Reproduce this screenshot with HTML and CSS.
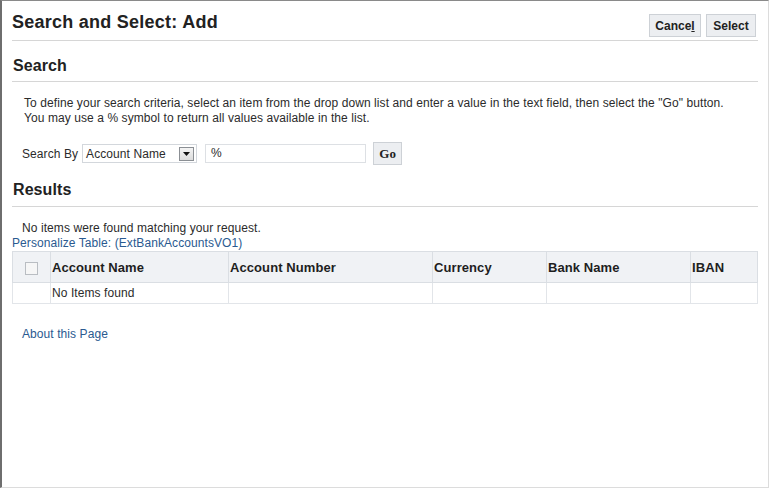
FILE: index.html
```html
<!DOCTYPE html>
<html>
<head>
<meta charset="utf-8">
<title>Search and Select: Add</title>
<link rel="stylesheet" href="styles.css">
</head>
<body>
<div class="frame">
  <div class="page">
    <div class="page-header">
      <h1 class="page-title">Search and Select: Add</h1>
      <div class="actions">
        <button class="btn">Cance<u>l</u></button>
        <button class="btn">Select</button>
      </div>
    </div>

    <h2 class="section-title">Search</h2>
    <p class="instructions">To define your search criteria, select an item from the drop down list and enter a value in the text field, then select the "Go" button.<br>You may use a % symbol to return all values available in the list.</p>
    <div class="search-row">
      <span class="label">Search By</span>
      <div class="select">
        <span class="select-text">Account Name</span>
        <span class="select-btn"><svg width="7" height="4" viewBox="0 0 7 4"><path d="M0 0H7L3.5 4Z" fill="#111"/></svg></span>
      </div>
      <div class="text-input">%</div>
      <button class="go-btn">Go</button>
    </div>

    <h2 class="section-title results-title">Results</h2>
    <div class="message">No items were found matching your request.</div>
    <a class="link personalize">Personalize Table: (ExtBankAccountsVO1)</a>
    <table class="grid">
      <colgroup>
        <col class="c1"><col class="c2"><col class="c3"><col class="c4"><col class="c5"><col class="c6">
      </colgroup>
      <thead>
        <tr>
          <th class="check-cell"><span class="checkbox"></span></th>
          <th>Account Name</th>
          <th>Account Number</th>
          <th>Currency</th>
          <th>Bank Name</th>
          <th>IBAN</th>
        </tr>
      </thead>
      <tbody>
        <tr>
          <td></td>
          <td>No Items found</td>
          <td></td>
          <td></td>
          <td></td>
          <td></td>
        </tr>
      </tbody>
    </table>
    <a class="link about">About this Page</a>
  </div>
</div>
</body>
</html>
```

FILE: styles.css
```css
html, body {
  margin: 0;
  padding: 0;
  background: #ffffff;
}

body {
  font-family: "Liberation Sans", Arial, sans-serif;
  font-size: 12px;
  color: #2b2b2b;
  letter-spacing: 0.08px;
}

.frame {
  box-sizing: border-box;
  width: 769px;
  height: 488px;
  border-top: 1px solid #8a8a8a;
  border-left: 2px solid #6e6e6e;
  border-right: 1px solid #dcdcdc;
  border-bottom: 1px solid #dcdcdc;
}

.page {
  padding: 0 10px 0 10px;
}

.page-header {
  display: flex;
  justify-content: space-between;
  align-items: center;
  height: 39px;
  border-bottom: 1px solid #d6d6d6;
}

.page-title {
  margin: 0;
  font-size: 18px;
  font-weight: bold;
  color: #222;
  line-height: 22px;
  padding-top: 2px;
  letter-spacing: 0.25px;
}

.actions {
  display: flex;
  gap: 5px;
  margin-right: 2px;
  padding-top: 10px;
}

.btn {
  box-sizing: border-box;
  height: 23px;
  padding: 0 5px;
  background: #eceef1;
  border: 1px solid #cdd1d6;
  font-family: "Liberation Sans", Arial, sans-serif;
  font-size: 12px;
  font-weight: bold;
  color: #222;
}

.btn:first-child {
  width: 52px;
}

.btn:last-child {
  width: 50px;
}

.section-title {
  margin: 0;
  padding: 15px 0 5px 1px;
  line-height: 20px;
  font-size: 16px;
  font-weight: bold;
  color: #222;
  border-bottom: 1px solid #d6d6d6;
}

.results-title {
  padding-top: 15px;
  padding-bottom: 6px;
}

.instructions {
  margin: 14px 0 0 12px;
  line-height: 15px;
  color: #2b2b2b;
}

.search-row {
  display: flex;
  align-items: center;
  margin: 16px 0 0 10px;
  height: 23px;
}

.label {
  margin-right: 4px;
}

.select {
  box-sizing: border-box;
  width: 115px;
  height: 19px;
  border: 1px solid #d3d7dc;
  display: flex;
  align-items: center;
  justify-content: space-between;
  padding: 0 2px 0 3px;
}

.select-btn {
  box-sizing: border-box;
  width: 15px;
  height: 14px;
  border: 1px solid #8b8f94;
  background: linear-gradient(#f4f4f4, #dcdcdc);
  display: flex;
  align-items: center;
  justify-content: center;
}

.text-input {
  box-sizing: border-box;
  width: 161px;
  height: 19px;
  margin-left: 8px;
  border: 1px solid #dde0e4;
  padding: 0 5px;
  line-height: 17px;
}

.go-btn {
  box-sizing: border-box;
  width: 29px;
  height: 23px;
  margin-left: 7px;
  padding: 0;
  background: #eceef1;
  border: 1px solid #cdd1d6;
  font-family: "Liberation Serif", "Times New Roman", serif;
  font-weight: bold;
  font-size: 13px;
  color: #222;
}

.message {
  margin: 14px 0 0 10px;
  line-height: 15px;
}

.link {
  display: block;
  color: #2a5a90;
  line-height: 15px;
  text-decoration: none;
}

.grid {
  width: 745px;
  border-collapse: collapse;
  table-layout: fixed;
  border: 1px solid #dadee3;
}

.c1 { width: 38px; }
.c2 { width: 178px; }
.c3 { width: 204px; }
.c4 { width: 114px; }
.c5 { width: 144px; }
.c6 { width: 67px; }

.grid th {
  height: 30px;
  padding: 0 1px;
  background: #f0f2f5;
  text-align: left;
  font-size: 13px;
  font-weight: bold;
  color: #1e1e1e;
  border: 1px solid #dadee3;
  vertical-align: middle;
}

.grid td {
  height: 20px;
  padding: 0 1px;
  border: 1px solid #e2e5e9;
  color: #2b2b2b;
}

.grid th.check-cell {
  text-align: center;
}

.checkbox {
  display: inline-block;
  box-sizing: border-box;
  width: 13px;
  height: 13px;
  border: 1px solid #b9bdc2;
  background: #f6f6f6;
  vertical-align: middle;
}

.about {
  margin: 23px 0 0 10px;
}
```
